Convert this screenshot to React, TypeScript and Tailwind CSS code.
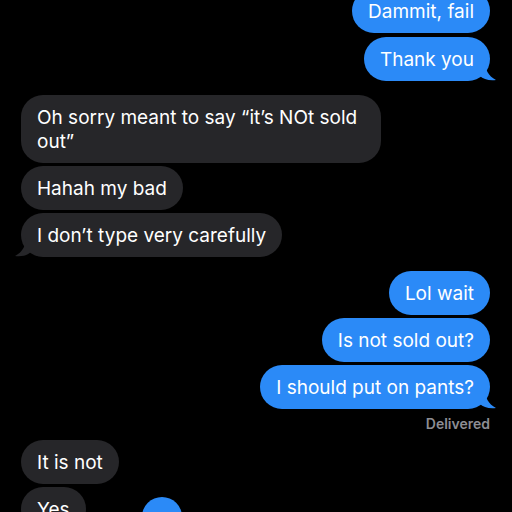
import React from "react";

const BLUE = "#2b8af7";
const GRAY = "#262629";

function Tail({ side, color }: { side: "left" | "right"; color: string }) {
  if (side === "right") {
    return (
      <svg className="absolute -right-[7px] bottom-0" width="20" height="20" viewBox="0 0 20 20">
        <path d="M0 0 L8 0 C8 8 11 15 19 19 C12 20 6 18 3 15 L0 15 Z" fill={color} />
      </svg>
    );
  }
  return (
    <svg className="absolute -left-[7px] bottom-0" width="20" height="20" viewBox="0 0 20 20">
      <path d="M20 0 L12 0 C12 8 9 15 1 19 C8 20 14 18 17 15 L20 15 Z" fill={color} />
    </svg>
  );
}

function Bubble({
  text,
  me,
  tail,
  wide,
}: {
  text: React.ReactNode;
  me?: boolean;
  tail?: boolean;
  wide?: boolean;
}) {
  return (
    <div className={`flex ${me ? "justify-end" : "justify-start"}`}>
      <div
        className={`relative rounded-[22px] px-4 pt-[11px] pb-[9px] text-[19px] leading-[24px] text-white ${
          me ? "bg-[#2b8af7]" : "bg-[#262629]"
        } ${wide ? "w-[360px]" : ""}`}
      >
        {tail && <Tail side={me ? "right" : "left"} color={me ? BLUE : GRAY} />}
        <span className="relative">{text}</span>
      </div>
    </div>
  );
}

export default function App() {
  return (
    <div
      className="w-[512px] h-[512px] overflow-hidden bg-black"
      style={{ fontFamily: "Inter, 'Noto Sans', sans-serif" }}
    >
      <div className="flex flex-col pl-[21px] pr-[22px] -mt-[11px]">
        <div className="flex flex-col gap-[4px]">
          <Bubble me text="Dammit, fail" />
          <Bubble me tail text="Thank you" />
        </div>
        <div className="flex flex-col gap-[3px] mt-[14px]">
          <Bubble wide text={<>Oh sorry meant to say “it’s NOt sold<br />out”</>} />
          <Bubble text="Hahah my bad" />
          <Bubble tail text="I don’t type very carefully" />
        </div>
        <div className="flex flex-col gap-[3px] mt-[14px]">
          <Bubble me text="Lol wait" />
          <Bubble me text="Is not sold out?" />
          <Bubble me tail text="I should put on pants?" />
        </div>
        <div className="flex justify-end mt-[7px] text-[14px] leading-[16px] font-semibold text-[#8d8d93]">
          Delivered
        </div>
        <div className="flex flex-col gap-[3px] mt-[8px]">
          <Bubble text="It is not" />
          <div className="flex items-start gap-[56px]">
            <div className="rounded-[22px] px-4 pt-[11px] pb-[9px] text-[19px] leading-[24px] text-white bg-[#262629]">
              Yes
            </div>
            <div className="mt-[10px] w-[40px] h-[40px] rounded-full bg-[#2b8af7] flex items-center justify-center text-white text-[14px] font-bold">
              ‼
            </div>
          </div>
        </div>
      </div>
    </div>
  );
}
